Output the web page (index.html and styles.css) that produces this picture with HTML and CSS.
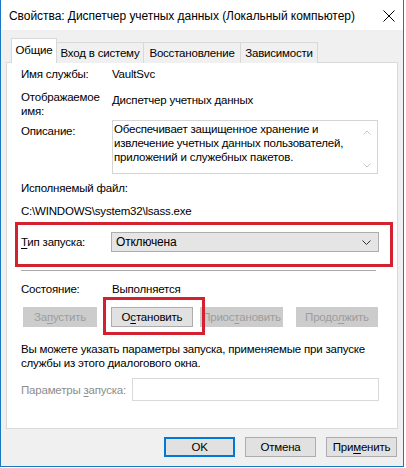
FILE: index.html
```html
<!DOCTYPE html>
<html>
<head>
    <meta charset="utf-8">
    <title>Свойства</title>
    <link rel="stylesheet" href="styles.css">
</head>
<body>
    <div class="window">
        <div class="titlebar">
            <span class="title">Свойства: Диспетчер учетных данных (Локальный компьютер)</span>
            <svg class="close" width="12" height="12" viewBox="0 0 12 12">
                <path d="M0.5 0.5 L11.5 11.5 M11.5 0.5 L0.5 11.5" stroke="#000" stroke-width="1" fill="none"/>
            </svg>
        </div>

        <div class="tabs">
            <div class="tab selected">Общие</div>
            <div class="tab t2">Вход в систему</div>
            <div class="tab t3">Восстановление</div>
            <div class="tab t4">Зависимости</div>
        </div>

        <div class="panel">
            <div class="row r1">
                <div class="label">Имя службы:</div>
                <div class="value">VaultSvc</div>
            </div>
            <div class="row r2">
                <div class="label">Отображаемое<br>имя:</div>
                <div class="value v2">Диспетчер учетных данных</div>
            </div>
            <div class="row r3">
                <div class="label l3">Описание:</div>
                <div class="descr">
                    <div class="descr-text">Обеспечивает защищенное хранение и извлечение учетных данных пользователей, приложений и служебных пакетов.</div>
                    <svg class="arr up" width="8" height="5" viewBox="0 0 8 5"><path d="M0.5 4.5 L4 1 L7.5 4.5" stroke="#c6c6c6" fill="none"/></svg>
                    <svg class="arr down" width="8" height="5" viewBox="0 0 8 5"><path d="M0.5 0.5 L4 4 L7.5 0.5" stroke="#c6c6c6" fill="none"/></svg>
                </div>
            </div>
            <div class="line r4">Исполняемый файл:</div>
            <div class="line r5">C:\WINDOWS\system32\lsass.exe</div>

            <div class="highlight">
                <div class="label"><u>Т</u>ип запуска:</div>
                <div class="combo">
                    <span>Отключена</span>
                    <svg width="9" height="5" viewBox="0 0 9 5"><path d="M0.5 0.5 L4.5 4.5 L8.5 0.5" stroke="#333" fill="none"/></svg>
                </div>
            </div>

            <div class="sep"></div>

            <div class="row r6">
                <div class="label">Состояние:</div>
                <div class="value">Выполняется</div>
            </div>

            <div class="btns">
                <div class="btn off b1">За<u>п</u>устить</div>
                <div class="btn b2">О<u>с</u>тановить</div>
                <div class="btn off b3">Приос<u>т</u>ановить</div>
                <div class="btn off b4">Продо<u>л</u>жить</div>
            </div>

            <div class="hint">Вы можете указать параметры запуска, применяемые при запуске службы из этого диалогового окна.</div>

            <div class="params">
                <div class="plabel">Параметры <u>з</u>апуска:</div>
                <div class="pinput"></div>
            </div>
        </div>

        <div class="footer">
            <div class="fbtn ok">OK</div>
            <div class="fbtn">Отмена</div>
            <div class="fbtn">При<u>м</u>енить</div>
        </div>
    </div>
</body>
</html>
```

FILE: styles.css
```css
body {
    margin: 0;
    background: #fff;
    font-family: "Liberation Sans", Arial, sans-serif;
    font-size: 11.5px;
    letter-spacing: -0.2px;
    line-height: 14px;
    color: #000;
}
u {
    text-decoration-thickness: 1px;
    text-underline-offset: 2px;
}
.window {
    width: 402px;
    height: 466px;
    background: #f0f0f0;
    border: 1px solid #1a78c2;
    border-top: none;
}
.titlebar {
    height: 30px;
    background: #fff;
    display: flex;
    align-items: center;
    justify-content: space-between;
    padding: 0 8px 0 8px;
}
.title {
    font-size: 12px;
    letter-spacing: -0.05px;
    white-space: nowrap;
    padding-top: 1px;
}
.close {
    margin-top: 1px;
}

/* вкладки */
.tabs {
    display: flex;
    align-items: flex-end;
    height: 32px;
    margin-left: 10px;
}
.tab {
    height: 20px;
    line-height: 21px;
    border: 1px solid #d9d9d9;
    border-bottom: none;
    background: #f0f0f0;
    margin-bottom: -1px;
    text-align: center;
    white-space: nowrap;
    flex-shrink: 0;
}
.tab + .tab {
    border-left: none;
}
.tab.selected {
    height: 24px;
    line-height: 22px;
    width: 44px;
    background: #fff;
    position: relative;
    z-index: 1;
}
.t2 { width: 86px; }
.t3 { width: 96px; }
.t4 { width: 76px; }

.panel {
    margin: 0 5px;
    height: 365px;
    background: #fff;
    border: 1px solid #d9d9d9;
    padding: 0 18px 0 14px;
}
.row {
    display: flex;
}
.label {
    width: 91px;
    flex-shrink: 0;
}
.r1 { padding-top: 4px; }
.r2 { margin-top: 9px; }
.v2 { padding-top: 3px; }
.r3 { margin-top: 2px; }
.l3 { padding-top: 4px; }
.descr {
    position: relative;
    width: 263px;
    height: 51px;
    border: 1px solid #d5d5d5;
    padding: 1px 0 0 1px;
    box-sizing: content-box;
}
.descr-text {
    width: 235px;
}
.arr {
    position: absolute;
    right: 6px;
}
.up { top: 9px; }
.down { top: 42px; }

.r4 { margin-top: 7px; }
.r5 { margin-top: 9px; }

.highlight {
    display: flex;
    align-items: center;
    margin: 4px -14px 0 -6px;
    border: 3px solid #d3212f;
    padding: 7px 11px 12px 3px;
}
.highlight .label {
    width: 90px;
}
.combo {
    flex: 1;
    height: 18px;
    background: #e5e5e5;
    border: 1px solid #adadad;
    display: flex;
    align-items: center;
    justify-content: space-between;
    padding: 0 7px 0 4px;
}
.combo span {
    font-size: 12px;
}

.sep {
    margin-top: 3px;
    height: 1px;
    background: #a8a8a8;
    margin-right: 3px;
}
.r6 { margin-top: 11px; }

.btns {
    display: flex;
    margin-top: 11px;
}
.btn {
    height: 18px;
    line-height: 18px;
    text-align: center;
    border: 1px solid #adadad;
    background: #e1e1e1;
    white-space: nowrap;
}
.btn.off {
    border-color: #cccccc;
    background: #cccccc;
    color: #9d9d9d;
}
.b1 {
    width: 72px;
    margin-left: 2px;
}
.b2 {
    width: 80px;
    margin-left: 14px;
    position: relative;
}
/* красная рамка поверх кнопки */
.b2::after {
    content: "";
    position: absolute;
    left: -9px;
    right: -13px;
    top: -11px;
    bottom: -9px;
    border: 3px solid #d3212f;
}
.b3 {
    width: 81px;
    margin-left: 7px;
}
.b4 {
    width: 80px;
    margin-left: 13px;
}

.hint {
    margin-top: 15px;
    margin-right: -10px;
}
.params {
    display: flex;
    align-items: center;
    margin-top: 8px;
}
.plabel {
    width: 111px;
    color: #8d8d8d;
    white-space: nowrap;
}
.pinput {
    flex: 1;
    height: 21px;
    border: 1px solid #d9d9d9;
}

.footer {
    display: flex;
    justify-content: flex-end;
    gap: 10px;
    padding: 8px 6px 0 0;
}
.fbtn {
    width: 69px;
    height: 18px;
    line-height: 18px;
    text-align: center;
    border: 1px solid #adadad;
    background: #e1e1e1;
}
.fbtn.ok {
    border: 2px solid #0078d7;
    width: 67px;
    height: 16px;
    line-height: 16px;
}
```
